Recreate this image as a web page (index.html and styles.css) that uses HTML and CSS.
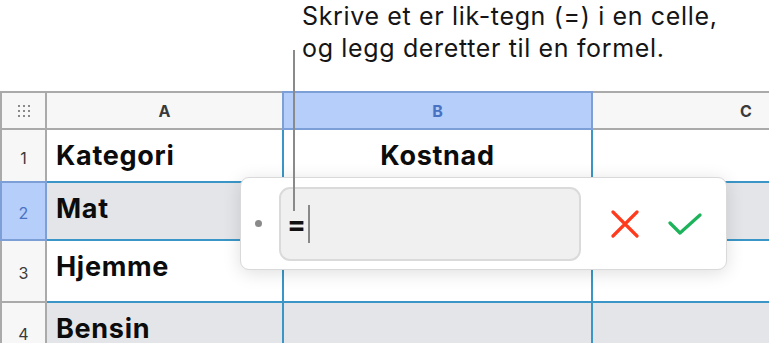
FILE: index.html
```html
<!DOCTYPE html>
<html lang="no">
<head>
    <meta charset="UTF-8">
    <title>Formel</title>
    <link rel="stylesheet" href="styles.css">
</head>
<body>
    <div class="callout">
        <p class="callout-text">Skrive et er lik-tegn (=) i en celle,<br>og legg deretter til en formel.</p>
    </div>

    <div class="sheet">
        <div class="hdr corner">
            <svg width="12" height="12" viewBox="0 0 12 12">
                <g fill="#8a8a8a">
                    <rect x="0" y="0" width="2" height="2"/><rect x="5" y="0" width="2" height="2"/><rect x="10" y="0" width="2" height="2"/>
                    <rect x="0" y="5" width="2" height="2"/><rect x="5" y="5" width="2" height="2"/><rect x="10" y="5" width="2" height="2"/>
                    <rect x="0" y="10" width="2" height="2"/><rect x="5" y="10" width="2" height="2"/><rect x="10" y="10" width="2" height="2"/>
                </g>
            </svg>
        </div>
        <div class="hdr col">A</div>
        <div class="hdr col selected">B</div>
        <div class="hdr col last">C</div>

        <div class="hdr num">1</div>
        <div class="cell first">Kategori</div>
        <div class="cell center">Kostnad</div>
        <div class="cell last"></div>

        <div class="hdr num selected">2</div>
        <div class="cell first grey">Mat</div>
        <div class="cell grey"></div>
        <div class="cell grey last"></div>

        <div class="hdr num">3</div>
        <div class="cell first">Hjemme</div>
        <div class="cell"></div>
        <div class="cell last"></div>

        <div class="hdr num">4</div>
        <div class="cell first grey">Bensin</div>
        <div class="cell grey"></div>
        <div class="cell grey last"></div>
    </div>

    <div class="pointer"></div>

    <div class="formula-bar">
        <span class="dot"></span>
        <div class="formula-input">
            <span class="eq">=</span><span class="caret"></span>
        </div>
        <button class="action" aria-label="Avbryt">
            <svg width="28" height="28" viewBox="0 0 28 28">
                <path d="M2 2 L26 26 M26 2 L2 26" stroke="#ff3b1e" stroke-width="3.2" stroke-linecap="round" fill="none"/>
            </svg>
        </button>
        <button class="action" aria-label="OK">
            <svg width="34" height="24" viewBox="0 0 34 24">
                <path d="M2 11 L12 21 L32 3" stroke="#1db35a" stroke-width="3.2" stroke-linecap="round" stroke-linejoin="round" fill="none"/>
            </svg>
        </button>
    </div>
</body>
</html>
```

FILE: styles.css
```css
body {
    margin: 0;
    width: 769px;
    height: 343px;
    overflow: hidden;
    background: #fff;
    font-family: Inter, Roboto, "Liberation Sans", sans-serif;
    color: #111;
    position: relative;
}
.callout {
    height: 91px;
    padding-left: 302px;
    box-sizing: border-box;
}
.callout-text {
    margin: 0;
    font-size: 25px;
    line-height: 32px;
    letter-spacing: 0.65px;
    color: #151515;
    white-space: nowrap;
}
.sheet {
    display: grid;
    grid-template-columns: 47px 237px 309px 306px;
    grid-template-rows: 39px 53px 58px 62px 60px;
    width: 899px;
}
.hdr {
    background: #f7f7f7;
    border-right: 2px solid #aaa;
    border-bottom: 2px solid #aaa;
    box-sizing: border-box;
    display: flex;
    align-items: center;
    justify-content: center;
    color: #3a3a3a;
}
.hdr.col {
    border-top: 2px solid #aaa;
    font-weight: bold;
    font-size: 16px;
}
.corner {
    border-top: 2px solid #aaa;
    border-left: 2px solid #aaa;
}
.num {
    border-left: 2px solid #aaa;
    font-size: 16px;
    padding-top: 4px;
}
.hdr.selected {
    background: #b5cefa;
    border-color: #7d9fd8;
    color: #4a72c2;
}
.hdr.col.selected {
    border-top-color: #7d9fd8;
    border-left: 2px solid #7d9fd8;
    margin-left: -2px;
}
.num.selected {
    border-top: 2px solid #7d9fd8;
    margin-top: -2px;
}
.cell {
    border-right: 2px solid #3a96c6;
    border-bottom: 2px solid #3a96c6;
    box-sizing: border-box;
    display: flex;
    align-items: flex-start;
    padding-top: 9px;
    font-weight: bold;
    font-size: 27px;
    letter-spacing: 0.7px;
    color: #0c0c0c;
    background: #fff;
}
.cell.first {
    padding-left: 9px;
}
.cell.center {
    justify-content: center;
}
.cell.grey {
    background: #e4e5e8;
}
.hdr.last, .cell.last {
    border-right: none;
}
.pointer {
    position: absolute;
    left: 293px;
    top: 50px;
    width: 2px;
    height: 161px;
    background: #8a8a8a;
    z-index: 2;
}
.formula-bar {
    position: absolute;
    left: 240px;
    top: 177px;
    width: 487px;
    height: 93px;
    box-sizing: border-box;
    background: #fff;
    border: 1px solid #d9d9d9;
    border-radius: 9px;
    box-shadow: 0 3px 18px rgba(0, 0, 0, 0.13);
    display: flex;
    align-items: center;
    padding: 0 0 0 14px;
}
.dot {
    width: 7px;
    height: 7px;
    border-radius: 50%;
    background: #8a8a8a;
    margin-right: 17px;
}
.formula-input {
    width: 302px;
    height: 74px;
    box-sizing: border-box;
    background: #f0f0f0;
    border: 2px solid #dadada;
    border-radius: 11px;
    display: flex;
    align-items: center;
    padding-left: 6px;
}
.eq {
    font-size: 28px;
    font-weight: bold;
    color: #111;
    line-height: 1;
}
.caret {
    width: 2px;
    height: 38px;
    background: #888;
    margin-left: 2px;
}
.action {
    border: none;
    background: none;
    padding: 0;
    margin: 0;
    display: flex;
    align-items: center;
    justify-content: center;
    cursor: pointer;
}
.action:first-of-type {
    margin-left: 30px;
}
.action + .action {
    margin-left: 29px;
}
```
